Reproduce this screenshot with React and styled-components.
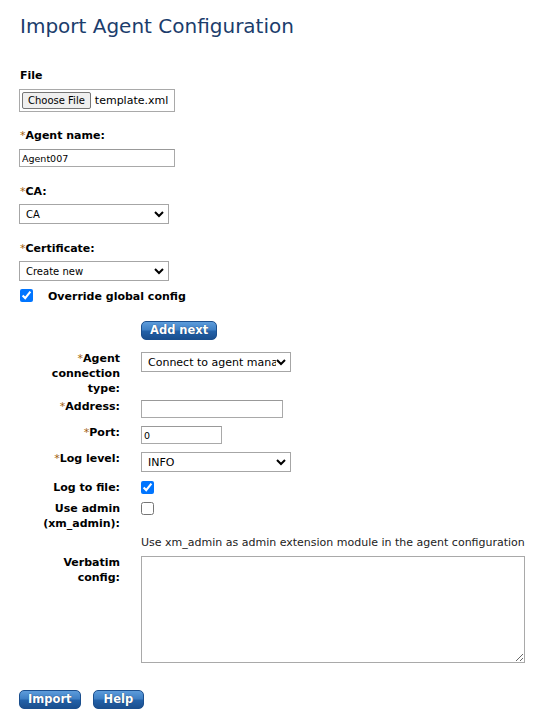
import React from "react";
import styled, { createGlobalStyle } from "styled-components";

const FONT = '"DejaVu Sans", Verdana, sans-serif';

const Global = createGlobalStyle`
  html, body { margin: 0; padding: 0; background: #fff; }
  body { font-family: ${FONT}; font-size: 11px; color: #000; }
  * { box-sizing: border-box; }
`;

const Page = styled.div`
  padding: 12px 20px 20px 19px;
  width: 538px;
`;

const Title = styled.h1`
  margin: 0 0 29px 1px;
  font-size: 20px;
  line-height: 28px;
  font-weight: normal;
  color: #1b3d6c;
`;

const Field = styled.div`
  display: flex;
  flex-direction: column;
  align-items: flex-start;
  margin-bottom: ${(p) => p.$mb ?? 18}px;
`;

const Label = styled.label`
  font-weight: bold;
  font-size: 11px;
  line-height: 14px;
  margin: 0 0 ${(p) => p.$mb ?? 6}px 1px;
`;

const Star = styled.span`
  color: #a0600b;
  font-weight: normal;
`;

const FileBox = styled.div`
  display: flex;
  align-items: center;
  gap: 4px;
  width: 156px;
  height: 23px;
  border: 1px solid #a9a9a9;
  padding: 0 2px;
  font-size: 11px;
  white-space: nowrap;
`;

const FileButton = styled.span`
  display: inline-flex;
  align-items: center;
  height: 17px;
  padding: 0 5px;
  border: 1px solid #767676;
  border-radius: 2px;
  background: #efefef;
  font-size: 10px;
  color: #000;
  white-space: nowrap;
`;

const TextInput = styled.input`
  width: ${(p) => p.$w}px;
  height: 18px;
  border: 1px solid #a9a9a9;
  border-top-color: #999;
  padding: 0 2px;
  font-family: ${FONT};
  font-size: 9.5px;
  color: #000;
  outline: none;
  margin: 0;
`;

const SelectWrap = styled.div`
  position: relative;
  width: ${(p) => p.$w ?? 150}px;
  height: 20px;
`;

const Select = styled.select`
  appearance: none;
  width: 100%;
  height: 100%;
  border: 1px solid #a6a6a6;
  border-radius: 0;
  background: #fff;
  padding: 0 14px 0 ${(p) => p.$pl ?? 6}px;
  font-family: ${FONT};
  font-size: ${(p) => p.$fs ?? 10}px;
  color: #000;
  margin: 0;
  outline: none;
`;

const Chevron = styled.svg`
  position: absolute;
  right: 5px;
  top: 6px;
  pointer-events: none;
`;

const Check = styled.input.attrs({ type: "checkbox" })`
  width: 13px;
  height: 13px;
  margin: 0;
  accent-color: #0075ff;
`;

const CheckRow = styled.div`
  display: flex;
  align-items: flex-start;
  gap: 15px;
  margin: 8px 0 0 1px;
`;

const CheckText = styled.span`
  font-weight: bold;
  line-height: 14px;
  margin-top: 1px;
`;

const BlueButton = styled.button`
  height: 19px;
  padding: 0 ${(p) => p.$px ?? 8}px;
  border: 1px solid #1b4f8e;
  border-radius: 5px;
  background: linear-gradient(#5d9cdb 0%, #3f80c5 45%, #2361a8 55%, #1b4f8e 100%);
  color: #fff;
  font-family: ${FONT};
  font-weight: bold;
  font-size: 11.5px;
  line-height: 17px;
  text-shadow: 0 0 1px #0d2c55;
  cursor: pointer;
  margin: 0;
`;

const AddRow = styled.div`
  padding-left: 122px;
  margin: 17px 0 12px 0;
`;

const Grid = styled.div`
  display: grid;
  grid-template-columns: 101px 1fr;
  column-gap: 21px;
  align-items: start;
`;

const RowLabel = styled.div`
  font-weight: bold;
  text-align: right;
  line-height: 15px;
  margin-top: -1px;
  padding-bottom: 4px;
`;

const Cell = styled.div`
  grid-column: 2;
  padding-bottom: ${(p) => p.$pb ?? 9}px;
  display: flex;
`;

const Desc = styled.div`
  grid-column: 2;
  line-height: 15px;
  padding-bottom: 6px;
  white-space: nowrap;
  color: #222;
`;

const TextArea = styled.textarea`
  width: 384px;
  height: 107px;
  border: 1px solid #a9a9a9;
  margin: 0;
  font-family: ${FONT};
  font-size: 11px;
  outline: none;
`;

const Footer = styled.div`
  display: flex;
  gap: 12px;
  margin-top: 27px;
`;

function Chev() {
  return (
    <Chevron width="10" height="8" viewBox="0 0 10 8">
      <path d="M1 2 L5 6 L9 2" fill="none" stroke="#000" strokeWidth="2" />
    </Chevron>
  );
}

function Req({ children }) {
  return (
    <>
      <Star>*</Star>
      {children}
    </>
  );
}

export default function App() {
  return (
    <Page>
      <Global />
      <Title>Import Agent Configuration</Title>

      <Field $mb={17}>
        <Label>File</Label>
        <FileBox>
          <FileButton>Choose File</FileButton>
          <span>template.xml</span>
        </FileBox>
      </Field>

      <Field>
        <Label><Req>Agent name:</Req></Label>
        <TextInput $w={156} defaultValue="Agent007" />
      </Field>

      <Field>
        <Label $mb={5}><Req>CA:</Req></Label>
        <SelectWrap>
          <Select defaultValue="CA"><option>CA</option></Select>
          <Chev />
        </SelectWrap>
      </Field>

      <Field $mb={0}>
        <Label $mb={5}><Req>Certificate:</Req></Label>
        <SelectWrap>
          <Select defaultValue="Create new"><option>Create new</option></Select>
          <Chev />
        </SelectWrap>
      </Field>

      <CheckRow>
        <Check defaultChecked />
        <CheckText>Override global config</CheckText>
      </CheckRow>

      <AddRow>
        <BlueButton>Add next</BlueButton>
      </AddRow>

      <Grid>
        <RowLabel><Req>Agent connection type:</Req></RowLabel>
        <Cell>
          <SelectWrap>
            <Select $fs={11} defaultValue="a"><option value="a">Connect to agent manager</option></Select>
            <Chev />
          </SelectWrap>
        </Cell>

        <RowLabel><Req>Address:</Req></RowLabel>
        <Cell $pb={8}><TextInput $w={142} /></Cell>

        <RowLabel><Req>Port:</Req></RowLabel>
        <Cell $pb={8}><TextInput $w={81} defaultValue="0" /></Cell>

        <RowLabel><Req>Log level:</Req></RowLabel>
        <Cell>
          <SelectWrap>
            <Select $fs={11} defaultValue="INFO"><option>INFO</option></Select>
            <Chev />
          </SelectWrap>
        </Cell>

        <RowLabel>Log to file:</RowLabel>
        <Cell $pb={8}><Check defaultChecked /></Cell>

        <RowLabel>Use admin (xm_admin):</RowLabel>
        <Cell><Check /></Cell>

        <Desc>Use xm_admin as admin extension module in the agent configuration</Desc>

        <RowLabel>Verbatim config:</RowLabel>
        <Cell $pb={0}><TextArea /></Cell>
      </Grid>

      <Footer>
        <BlueButton>Import</BlueButton>
        <BlueButton $px={10}>Help</BlueButton>
      </Footer>
    </Page>
  );
}
